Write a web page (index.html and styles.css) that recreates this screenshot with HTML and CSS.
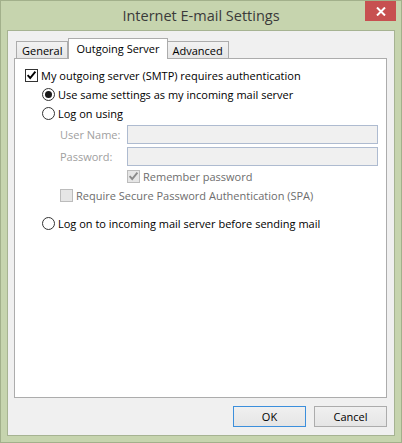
FILE: index.html
```html
<!doctype html>
<html>
	<head>
		<meta charset="utf-8">
		<title>Internet E-mail Settings</title>
		<link rel="stylesheet" href="styles.css">
	</head>
	<body>
		<div class="titlebar">
			<div class="title">Internet E-mail Settings</div>
			<div class="close">
				<svg width="10" height="9" viewBox="0 0 10 9"><path d="M1 0.5l8 8M9 0.5l-8 8" stroke="#fff" stroke-width="2"/></svg>
			</div>
		</div>
		<div class="client">
			<div class="tabs">
				<div class="tab">General</div>
				<div class="tab active">Outgoing Server</div>
				<div class="tab">Advanced</div>
			</div>
			<div class="panel">
				<div class="row">
					<svg class="box" viewBox="0 0 13 13"><rect x=".5" y=".5" width="12" height="12" fill="#fff" stroke="#333"/><path d="M2.6 6.2l2.6 2.8 5.2-6.4" fill="none" stroke="#000" stroke-width="1.9"/></svg>
					<span>My outgoing server (SMTP) requires authentication</span>
				</div>
				<div class="row sub">
					<svg class="box" viewBox="0 0 13 13"><circle cx="6.5" cy="6.5" r="6" fill="#fff" stroke="#333"/><circle cx="6.5" cy="6.5" r="3.5" fill="#1a1a1a"/></svg>
					<span>Use same settings as my incoming mail server</span>
				</div>
				<div class="row sub">
					<svg class="box" viewBox="0 0 13 13"><circle cx="6.5" cy="6.5" r="6" fill="#fff" stroke="#333"/></svg>
					<span>Log on using</span>
				</div>
				<div class="field user">
					<label>User Name:</label>
					<div class="input"></div>
				</div>
				<div class="field pass">
					<label>Password:</label>
					<div class="input"></div>
				</div>
				<div class="row remember off">
					<svg class="box" viewBox="0 0 13 13"><rect x=".5" y=".5" width="12" height="12" fill="#e6e6e6" stroke="#bcbcbc"/><path d="M2.6 6.2l2.6 2.8 5.2-6.4" fill="none" stroke="#8a8a8a" stroke-width="1.9"/></svg>
					<span>Remember password</span>
				</div>
				<div class="row spa off">
					<svg class="box" viewBox="0 0 13 13"><rect x=".5" y=".5" width="12" height="12" fill="#e6e6e6" stroke="#bcbcbc"/></svg>
					<span>Require Secure Password Authentication (SPA)</span>
				</div>
				<div class="row sub last">
					<svg class="box" viewBox="0 0 13 13"><circle cx="6.5" cy="6.5" r="6" fill="#fff" stroke="#333"/></svg>
					<span>Log on to incoming mail server before sending mail</span>
				</div>
			</div>
			<div class="buttons">
				<div class="btn ok">OK</div>
				<div class="btn">Cancel</div>
			</div>
		</div>
	</body>
</html>
```
FILE: styles.css
```css
* {
	margin: 0;
	padding: 0;
	box-sizing: border-box;
}
body {
	width: 402px;
	height: 443px;
	background-color: #c6d4ae;
	border: 1px solid #a2b08b;
	font-family: "Open Sans", "Liberation Sans", sans-serif;
	font-size: 11px;
	color: #000;
	display: flex;
	flex-direction: column;
	overflow: hidden;
}
.titlebar {
	height: 29px;
	display: grid;
	grid-template-columns: 1fr auto 1fr;
}
.title {
	grid-column: 2;
	line-height: 29px;
	font-size: 14.5px;
	color: #3a3a3a;
}
.close {
	grid-column: 3;
	justify-self: end;
	width: 31px;
	height: 20px;
	margin-right: 5px;
	background-color: #c75050;
	display: flex;
	align-items: center;
	justify-content: center;
}
.client {
	flex: 1;
	margin: 0 6px 6px 6px;
	background-color: #f0f0f0;
	border: 1px solid #a6b392;
	padding: 7px 7px 0 6px;
	display: flex;
	flex-direction: column;
}
.tabs {
	display: flex;
	align-items: flex-end;
	height: 20px;
	margin-left: 2px;
}
.tab {
	height: 17px;
	line-height: 17px;
	padding: 0 5px;
	border: 1px solid #acacac;
	border-bottom: 0;
	background: linear-gradient(#f2f2f2, #e6e6e6);
}
.tab + .tab {
	border-left: 0;
}
.tab.active {
	height: 21px;
	line-height: 19px;
	margin-bottom: -1px;
	padding: 0 7px;
	background: #fff;
	border-left: 1px solid #acacac;
	position: relative;
	z-index: 1;
}
.tab.active + .tab {
	border-left: 0;
}
.panel {
	height: 340px;
	background-color: #fff;
	border: 1px solid #acacac;
	padding: 7px 0 0 10px;
}
.row {
	display: flex;
	align-items: center;
	gap: 3px;
	height: 19px;
	white-space: nowrap;
}
.box {
	width: 13px;
	height: 13px;
	flex: none;
}
.sub {
	margin-left: 17px;
}
.row.off {
	color: #6d6d6d;
}
.field {
	display: flex;
	align-items: center;
	height: 19px;
	margin-left: 35px;
	color: #a0a0a0;
}
.field label {
	width: 67px;
}
.field.user {
	margin-top: 2px;
}
.field.pass {
	margin-top: 3px;
}
.input {
	width: 251px;
	height: 19px;
	background-color: #f0f0f0;
	border: 1px solid #aebbd0;
}
.remember {
	margin-top: 1px;
	margin-left: 102px;
}
.spa {
	margin-left: 35px;
}
.last {
	margin-top: 9px;
}
.buttons {
	display: flex;
	justify-content: flex-end;
	gap: 8px;
	margin-top: 8px;
}
.btn {
	width: 73px;
	height: 21px;
	line-height: 19px;
	text-align: center;
	border: 1px solid #acacac;
	background: linear-gradient(#f0f0f0, #e5e5e5);
}
.btn.ok {
	border-color: #3c8fdc;
}
```
